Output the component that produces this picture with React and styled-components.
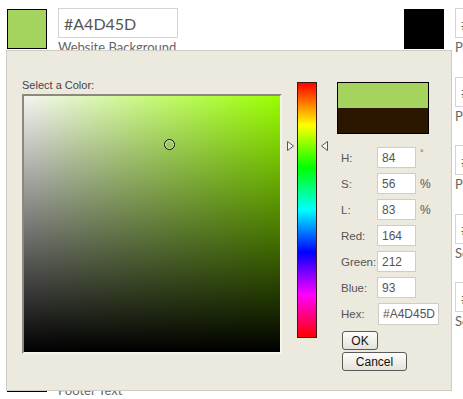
import React from 'react';
import styled, { createGlobalStyle } from 'styled-components';

const GlobalStyle = createGlobalStyle`
    html, body {
        margin: 0;
        padding: 0;
        background: #fff;
        overflow: hidden;
    }
    * {
        box-sizing: border-box;
    }
`;

const settings = [
    { label: 'Website Background', value: '#A4D45D', color: '#A4D45D' },
    { label: 'Header Background', value: '#FFFFFF', color: '#FFFFFF' },
    { label: 'Navigation Background', value: '#333333', color: '#333333' },
    { label: 'Content Background', value: '#FFFFFF', color: '#FFFFFF' },
    { label: 'Footer Background', value: '#222222', color: '#222222' },
    { label: 'Footer Text', value: '#FFFFFF', color: '#FFFFFF' },
    { label: 'Primary Text', value: '#000000', color: '#000000' },
    { label: 'Primary Link', value: '#000000', color: '#000000' },
    { label: 'Primary Hover', value: '#000000', color: '#000000' },
    { label: 'Secondary Text', value: '#000000', color: '#000000' },
    { label: 'Secondary Link', value: '#000000', color: '#000000' },
];

const fields = [
    { label: 'H:', value: '84', unit: '°' },
    { label: 'S:', value: '56', unit: '%' },
    { label: 'L:', value: '83', unit: '%' },
    { label: 'Red:', value: '164' },
    { label: 'Green:', value: '212' },
    { label: 'Blue:', value: '93' },
    { label: 'Hex:', value: '#A4D45D', wide: true },
];

const Arrow = ({ flip }) => (
    <svg width="7" height="10" viewBox="0 0 7 10">
        {flip
            ? <polygon points="6.5,0.5 0.5,5 6.5,9.5" fill="#fbfaf6" stroke="#555" strokeWidth="1" />
            : <polygon points="0.5,0.5 6.5,5 0.5,9.5" fill="#fbfaf6" stroke="#555" strokeWidth="1" />}
    </svg>
);

const App = () => {
    return (
        <>
            <GlobalStyle />
            <PAGE>
                <GRID>
                    {settings.map((s) => (
                        <ITEM key={s.label}>
                            <SWATCH color={s.color} />
                            <FIELD>
                                <HEXBOX>{s.value}</HEXBOX>
                                <CAPTION>{s.label}</CAPTION>
                            </FIELD>
                        </ITEM>
                    ))}
                </GRID>

                <DIALOG>
                    <PICKCOL>
                        <TITLE>Select a Color:</TITLE>
                        <SATBOX>
                            <CURSOR style={{ left: 140, top: 43 }} />
                        </SATBOX>
                    </PICKCOL>

                    <HUECOL>
                        <HUEBAR />
                        <ARROWL><Arrow /></ARROWL>
                        <ARROWR><Arrow flip /></ARROWR>
                    </HUECOL>

                    <PANEL>
                        <PREVIEW>
                            <SAMPLE color="#A4D45D" />
                            <SAMPLE color="#2B1700" />
                        </PREVIEW>
                        <FIELDS>
                            {fields.map((f) => (
                                <ROW key={f.label}>
                                    <LABEL>{f.label}</LABEL>
                                    <VALUE wide={f.wide}>{f.value}</VALUE>
                                    {f.unit && <UNIT small={f.unit === '°'}>{f.unit}</UNIT>}
                                </ROW>
                            ))}
                        </FIELDS>
                        <BUTTONS>
                            <BUTTON width={36}>OK</BUTTON>
                            <BUTTON width={65}>Cancel</BUTTON>
                        </BUTTONS>
                    </PANEL>
                </DIALOG>
            </PAGE>
        </>
    );
};

export default App;

const PAGE = styled.div`
    position: relative;
    width: 463px;
    height: 399px;
    overflow: hidden;
    font-family: Lato, "Noto Sans", sans-serif;
`;
const GRID = styled.div`
    display: grid;
    grid-template-columns: 397px 397px;
    grid-template-rows: repeat(6, 68.6px);
    grid-auto-flow: column;
    padding: 8px 0 0 7px;
`;
const ITEM = styled.div`
    display: flex;
    align-items: flex-start;
    gap: 11px;
`;
const SWATCH = styled.div`
    width: 40px;
    height: 40px;
    margin-top: 1px;
    background: ${(p) => p.color};
    border: 1px solid #000;
    flex-shrink: 0;
`;
const FIELD = styled.div`
    display: flex;
    flex-direction: column;
`;
const HEXBOX = styled.div`
    width: 120px;
    height: 30px;
    border: 1px solid #d4d4d4;
    padding-left: 5px;
    display: flex;
    align-items: center;
    font-size: 16px;
    color: #555;
    white-space: nowrap;
    overflow: hidden;
`;
const CAPTION = styled.div`
    margin-top: 1px;
    font-size: 13px;
    line-height: 16px;
    color: #666;
    white-space: nowrap;
`;
const DIALOG = styled.div`
    position: absolute;
    left: 6px;
    top: 50px;
    width: 446px;
    height: 341px;
    background: #ece9df;
    border: 1px solid #cfccc3;
    padding: 28px 0 0 15px;
    display: flex;
    align-items: flex-start;
    font-family: "Liberation Sans", Arial, sans-serif;
`;
const PICKCOL = styled.div`
    display: flex;
    flex-direction: column;
    width: 260px;
`;
const TITLE = styled.div`
    font-size: 11px;
    line-height: 13px;
    color: #444;
    margin-bottom: 2px;
`;
const SATBOX = styled.div`
    position: relative;
    width: 260px;
    height: 260px;
    border: 2px solid;
    border-color: #8c887c #f7f5ef #f7f5ef #8c887c;
    background:
        linear-gradient(to top, #000, rgba(0, 0, 0, 0)),
        linear-gradient(to right, #f4f4f4, hsl(84, 100%, 50%));
`;
const CURSOR = styled.div`
    position: absolute;
    width: 11px;
    height: 11px;
    border-radius: 50%;
    border: 1.5px solid #111;
    box-shadow: inset 0 0 0 1px rgba(255, 255, 255, 0.6);
`;
const HUECOL = styled.div`
    position: relative;
    width: 42px;
    margin: 3px 0 0 4px;
`;
const HUEBAR = styled.div`
    width: 20px;
    height: 256px;
    margin: 0 auto;
    border: 1px solid #3a1a1a;
    background: linear-gradient(
        to bottom,
        #f00 0%,
        #ff0 16.6%,
        #0f0 33.3%,
        #0ff 50%,
        #00f 66.6%,
        #f0f 83.3%,
        #f00 100%
    );
`;
const ARROWL = styled.div`
    position: absolute;
    left: 1px;
    top: 59px;
    line-height: 0;
`;
const ARROWR = styled.div`
    position: absolute;
    left: 35px;
    top: 59px;
    line-height: 0;
`;
const PANEL = styled.div`
    display: flex;
    flex-direction: column;
    margin: 3px 0 0 9px;
`;
const PREVIEW = styled.div`
    width: 92px;
    height: 52px;
    border: 1px solid #000;
    display: flex;
    flex-direction: column;
`;
const SAMPLE = styled.div`
    flex: 1;
    background: ${(p) => p.color};
`;
const FIELDS = styled.div`
    display: flex;
    flex-direction: column;
    gap: 5px;
    margin: 13px 0 0 4px;
`;
const ROW = styled.div`
    display: flex;
    align-items: center;
    height: 21px;
`;
const LABEL = styled.div`
    width: 36px;
    font-size: 11.5px;
    color: #555;
    white-space: nowrap;
`;
const VALUE = styled.div`
    width: ${(p) => (p.wide ? '61px' : '39px')};
    height: ${(p) => (p.wide ? '22px' : '21px')};
    margin-left: ${(p) => (p.wide ? '1px' : '0')};
    background: #fff;
    border: 1px solid #d0cdc4;
    padding-left: 4px;
    display: flex;
    align-items: center;
    font-size: 12px;
    color: #555;
`;
const UNIT = styled.div`
    margin-left: 4px;
    font-size: ${(p) => (p.small ? '9px' : '12px')};
    color: #555;
    align-self: ${(p) => (p.small ? 'flex-start' : 'center')};
    margin-top: ${(p) => (p.small ? '1px' : '0')};
`;
const BUTTONS = styled.div`
    display: flex;
    flex-direction: column;
    align-items: flex-start;
    gap: 2px;
    margin: 7px 0 0 5px;
`;
const BUTTON = styled.button`
    width: ${(p) => p.width}px;
    height: 19px;
    padding: 0;
    border: 1px solid #5a5a5a;
    border-radius: 3px;
    background: linear-gradient(to bottom, #fdfdfb, #e4e2da);
    font-family: "Liberation Sans", Arial, sans-serif;
    font-size: 12px;
    color: #111;
    cursor: pointer;
`;
